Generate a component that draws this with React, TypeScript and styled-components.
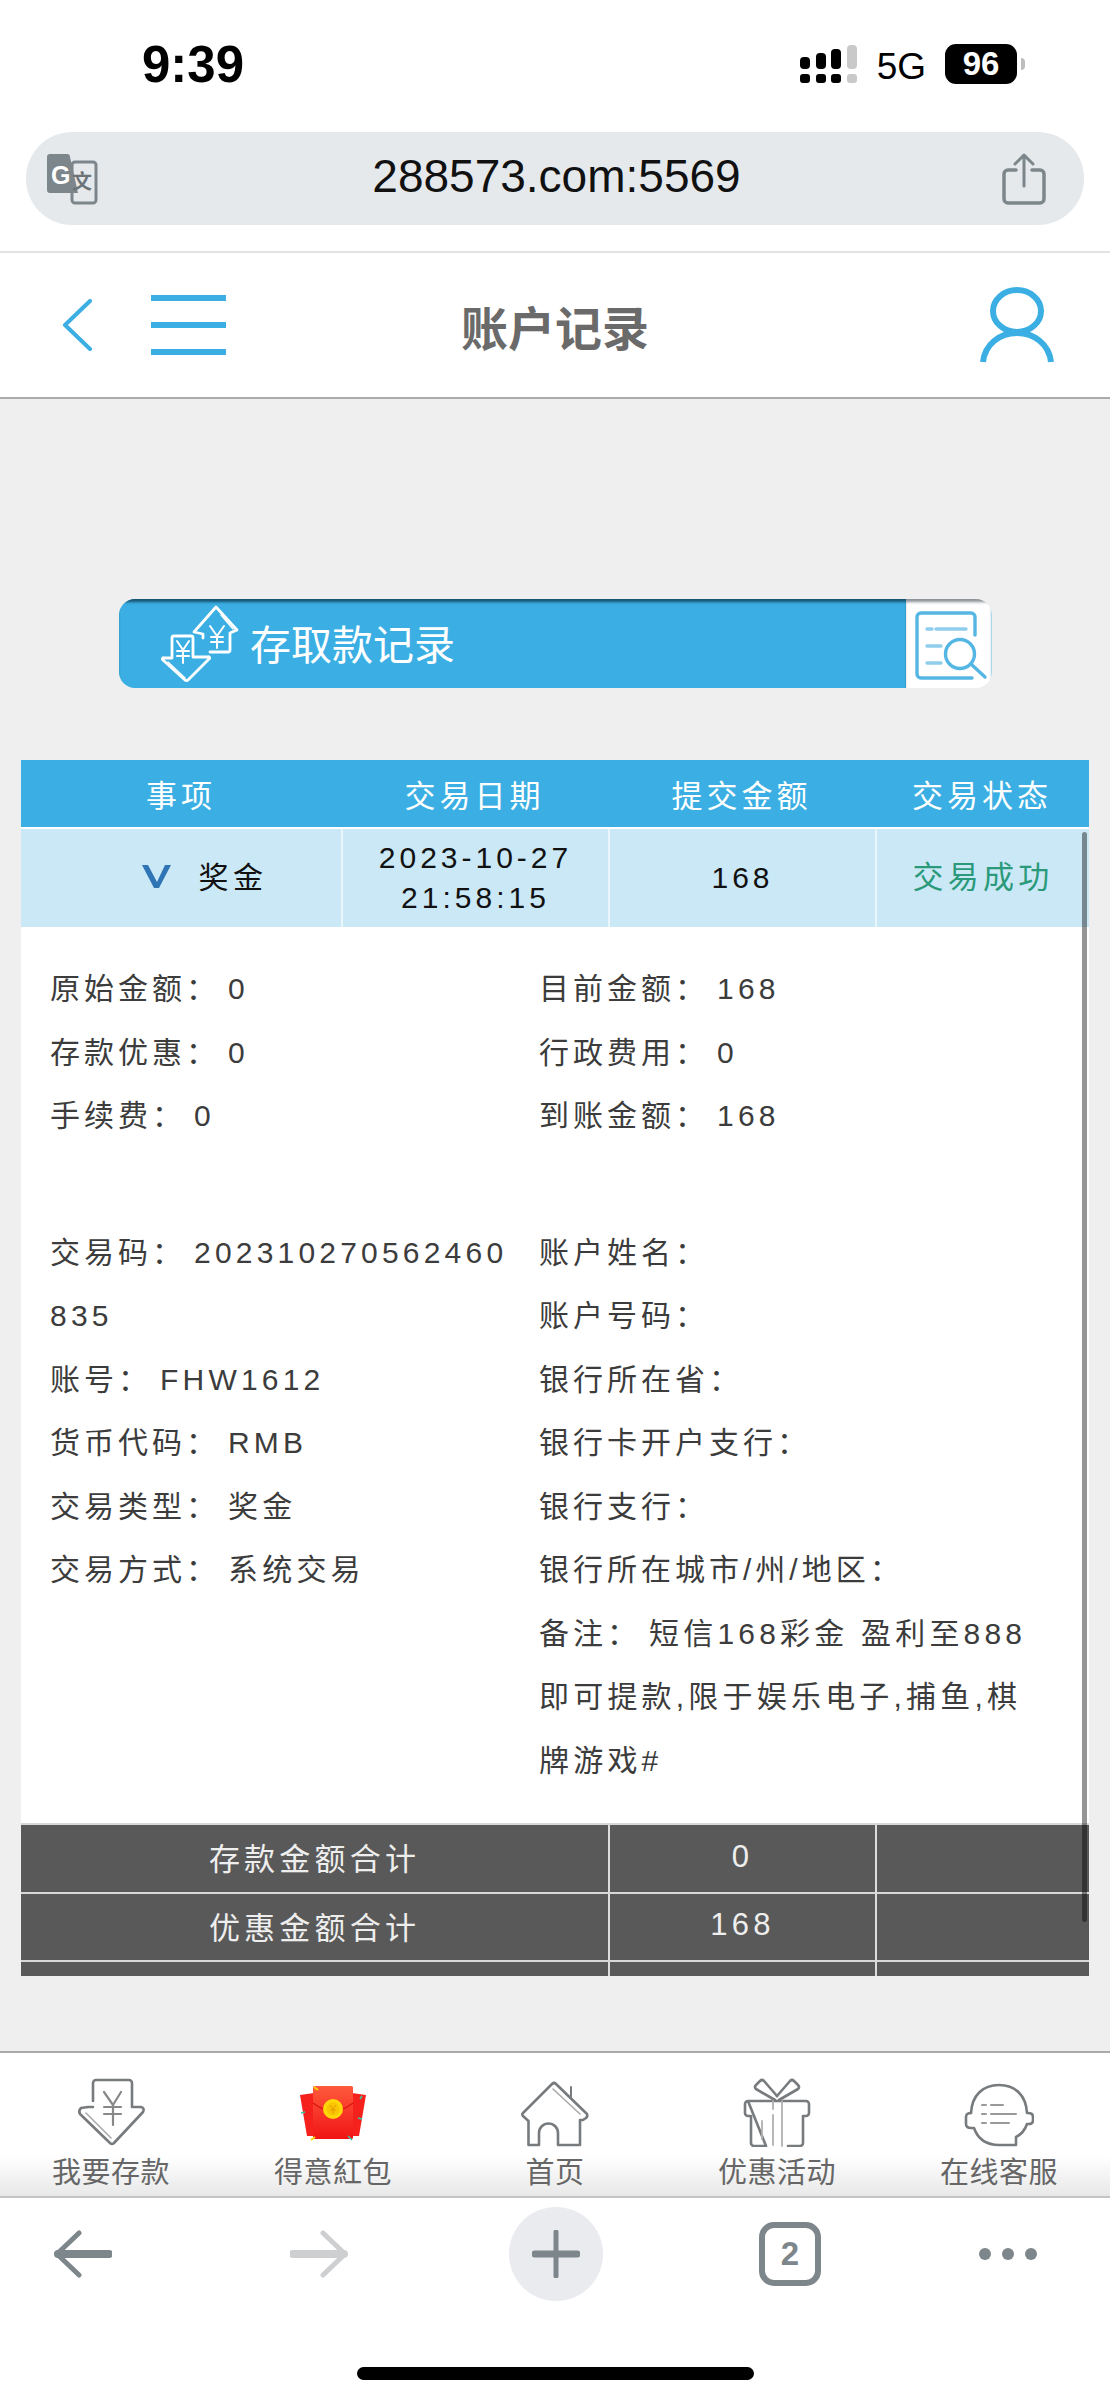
import React from "react";
import styled, { createGlobalStyle } from "styled-components";

const BLUE = "#3bafe3";
const GREY = "#7d868b";
const ICON = "#777b7d";
const FONT = `"Liberation Sans", "Noto Sans CJK SC", sans-serif`;

const GlobalStyle = createGlobalStyle`
  html, body { margin: 0; padding: 0; background: #fff; }
  * { box-sizing: border-box; }
  body { font-family: ${FONT}; }
`;

const Page = styled.div`
  width: 1110px;
  height: 2400px;
  display: flex;
  flex-direction: column;
  overflow: hidden;
  background: #fff;
`;

const StatusBar = styled.div`
  height: 132px;
  padding: 0 85px 4px 142px;
  display: flex;
  align-items: center;
  justify-content: space-between;
`;
const Clock = styled.div`
  font-size: 51px;
  font-weight: 700;
  color: #000;
`;
const StatusRight = styled.div`
  display: flex;
  align-items: center;
`;
const Net = styled.div`
  font-size: 37px;
  color: #000;
  margin: 0 19px 0 20px;
  padding-top: 5px;
`;
const Battery = styled.div`
  width: 72px;
  height: 40px;
  border-radius: 11px;
  background: #000;
  color: #fff;
  font-size: 33px;
  font-weight: 700;
  display: flex;
  align-items: center;
  justify-content: center;
  margin-right: 4px;
`;
const BatteryNub = styled.div`
  width: 4px;
  height: 12px;
  border-radius: 0 4px 4px 0;
  background: #bdbdbd;
`;

const UrlWrap = styled.div`
  height: 121px;
  padding: 0 26px;
  border-bottom: 2px solid #e2e2e2;
`;
const UrlBar = styled.div`
  height: 93px;
  border-radius: 46px;
  background: #e6e9ec;
  padding: 0 38px 0 21px;
  display: flex;
  align-items: center;
  justify-content: space-between;
`;
const UrlText = styled.div`
  font-size: 46px;
  color: #111;
  padding: 0 0 5px 12px;
`;

const Header = styled.div`
  height: 146px;
  padding: 0 56px;
  display: grid;
  grid-template-columns: 1fr auto 1fr;
  align-items: center;
  background: #fff;
  border-bottom: 2px solid #aaa;
`;
const HeaderLeft = styled.div`
  display: flex;
  align-items: center;
  gap: 59px;
  padding-left: 6px;
`;
const Burger = styled.div`
  width: 75px;
  height: 60px;
  display: flex;
  flex-direction: column;
  justify-content: space-between;
  span {
    display: block;
    height: 6px;
    background: ${BLUE};
  }
`;
const Title = styled.h1`
  margin: 0;
  font-size: 47px;
  font-weight: 700;
  color: #6a6a6a;
`;
const HeaderRight = styled.div`
  display: flex;
  justify-content: flex-end;
`;

const Main = styled.main`
  flex: 1;
  background: #efefef;
  padding: 200px 21px 0;
`;
const Banner = styled.div`
  width: 873px;
  height: 89px;
  margin-left: 98px;
  border-radius: 16px;
  overflow: hidden;
  display: flex;
`;
const BannerTitle = styled.div`
  flex: 1;
  display: flex;
  align-items: center;
  gap: 10px;
  padding-left: 41px;
  background: ${BLUE};
  box-shadow: inset 0 4px 3px -1px rgba(10, 50, 70, 0.75);
  color: #fff;
  font-size: 41px;
  span { padding-bottom: 4px; }
`;
const BannerSearch = styled.div`
  width: 86px;
  background: #fff;
  box-shadow: inset 0 4px 3px -1px rgba(60, 70, 80, 0.6);
  border-right: 1px solid #a9d9ef;
`;

const Table = styled.section`
  position: relative;
  margin-top: 72px;
  width: 1068px;
  height: 1216px;
  background: #fff;
  overflow: hidden;
  font-size: 30px;
  letter-spacing: 4px;
`;
const ScrollThumb = styled.div`
  position: absolute;
  left: 1061px;
  top: 72px;
  width: 5px;
  height: 1090px;
  border-radius: 3px;
  background: rgba(0, 0, 0, 0.42);
`;
const Columns = styled.div`
  display: grid;
  grid-template-columns: 320px 267px 267px 214px;
`;
const HeadRow = styled(Columns)`
  height: 67px;
  background: ${BLUE};
  color: #fff;
  margin-bottom: 2px;
`;
const HeadCell = styled.div`
  display: flex;
  align-items: center;
  justify-content: center;
  letter-spacing: 4px;
  font-size: 31px;
`;
const DataRow = styled(Columns)`
  height: 98px;
  background: #cbe8f6;
  color: #111;
`;
const DataCell = styled.div<{ $status?: boolean }>`
  display: flex;
  align-items: center;
  justify-content: center;
  gap: 27px;
  text-align: center;
  line-height: 40px;
  font-size: ${(p) => (p.$status ? 31 : 30)}px;
  letter-spacing: ${(p) => (p.$status ? 4.2 : 4)}px;
  color: ${(p) => (p.$status ? "#2a9a7a" : "#111")};
  border-left: 2px solid #eaf6fb;
  &:first-child { border-left: none; padding-left: 48px; letter-spacing: 4.6px; }
`;
const Details = styled.div`
  height: 896px;
  padding: 30px 0 0 29px;
  display: grid;
  grid-template-columns: 489px 525px;
  grid-template-rows: auto 1fr;
  row-gap: 73px;
  line-height: 63.5px;
  color: #3c3c3c;
`;
const DetailBlock = styled.div`
  padding-right: 20px;
  word-break: break-all;
  p { margin: 0; }
`;
const Value = styled.span`
  margin-left: 8px;
  letter-spacing: 4.2px;
`;
const TotalRow = styled.div<{ $h: number }>`
  display: grid;
  grid-template-columns: 587px 267px 214px;
  height: ${(p) => p.$h}px;
  background: #595959;
  color: #eee;
  border-top: 2px solid #d8d8d8;
  font-size: 31px;
  letter-spacing: 4.2px;
`;
const TotalCell = styled.div`
  display: flex;
  align-items: center;
  justify-content: center;
  padding-bottom: 4px;
  border-left: 2px solid #ddd;
  &:first-child { border-left: none; }
`;

const BottomNav = styled.nav`
  height: 147px;
  padding-top: 24px;
  display: grid;
  grid-template-columns: repeat(5, 222px);
  border-top: 2px solid #aaa;
  border-bottom: 2px solid #c4c4c4;
  background: linear-gradient(#fff 0, #fff 72%, #e8e8e8 100%);
`;
const NavItem = styled.div`
  display: flex;
  flex-direction: column;
  align-items: center;
  color: #666;
  font-size: 29px;
  letter-spacing: 0.5px;
  line-height: 36px;
  svg { margin-bottom: 8px; }
`;

const Chrome = styled.div`
  flex: none;
  height: 202px;
  display: flex;
  flex-direction: column;
  align-items: center;
`;
const Toolbar = styled.div`
  align-self: stretch;
  padding: 9px 0 0 54px;
  display: flex;
  align-items: center;
`;
const ToolSlot = styled.div<{ $ml?: number }>`
  margin-left: ${(p) => p.$ml ?? 0}px;
  display: flex;
`;
const PlusCircle = styled.div`
  width: 94px;
  height: 94px;
  border-radius: 50%;
  background: #e9ebef;
  display: flex;
  align-items: center;
  justify-content: center;
`;
const TabCount = styled.div`
  width: 62px;
  height: 64px;
  border: 6px solid ${GREY};
  border-radius: 15px;
  display: flex;
  align-items: center;
  justify-content: center;
  color: ${GREY};
  font-size: 33px;
  font-weight: 700;
`;
const HomeBar = styled.div`
  margin-top: 66px;
  width: 397px;
  height: 13px;
  border-radius: 7px;
  background: #000;
`;

function Signal() {
  const bars = [
    { x: 0, y: 12, h: 12 },
    { x: 16, y: 8, h: 16 },
    { x: 31, y: 4, h: 20 },
    { x: 47, y: 0, h: 24 },
  ];
  return (
    <svg width="57" height="38" viewBox="0 0 57 38">
      {bars.map((b, i) => (
        <g key={i} fill={i === 3 ? "#c9c9c9" : "#000"}>
          <rect x={b.x} y={b.y} width="10" height={b.h} rx="4" />
          <rect x={b.x} y="29" width="10" height="9" rx="3" />
        </g>
      ))}
    </svg>
  );
}

function TranslateIcon() {
  return (
    <svg width="52" height="52" viewBox="0 0 52 52">
      <rect x="25" y="9" width="24" height="41" rx="3" fill="#e6e9ec" stroke={GREY} strokeWidth="3" />
      <path d="M3 1h17a3 3 0 0 1 3 3l8 36H3a3 3 0 0 1-3-3V4a3 3 0 0 1 3-3z" fill={GREY} />
      <text x="4" y="31" fontFamily="Liberation Sans" fontWeight="700" fontSize="25" fill="#fff">G</text>
      <text x="25" y="36" fontFamily="Noto Sans CJK SC" fontWeight="700" fontSize="20" fill="#6d7478">文</text>
    </svg>
  );
}

function ShareIcon() {
  return (
    <svg width="44" height="52" viewBox="0 0 44 52" fill="none" stroke={GREY}>
      <path d="M14 17H6a4 4 0 0 0-4 4v25a4 4 0 0 0 4 4h32a4 4 0 0 0 4-4V21a4 4 0 0 0-4-4h-8" strokeWidth="3.5" strokeLinecap="round" />
      <path d="M22 33V3M13 11l9-9 9 9" strokeWidth="3" strokeLinecap="round" strokeLinejoin="round" />
    </svg>
  );
}

function BackChevron() {
  return (
    <svg width="30" height="52" viewBox="0 0 30 52" fill="none" stroke={BLUE} strokeWidth="4" strokeLinecap="round" strokeLinejoin="round">
      <path d="M28 2L3 26l25 24" />
    </svg>
  );
}

function UserIcon() {
  return (
    <svg width="74" height="76" viewBox="0 0 74 76" fill="none" stroke={BLUE} strokeWidth="6">
      <ellipse cx="37" cy="24" rx="24" ry="21" />
      <path d="M3 75C5 57 20 46 37 46s32 11 34 29" />
    </svg>
  );
}

function TransferIcon() {
  return (
    <svg width="80" height="80" viewBox="0 0 80 80" fill="none" stroke="#fff" strokeWidth="2.8" strokeLinejoin="round" strokeLinecap="round">
      <path d="M34 28L56 3l21 23-7 3v17a2 2 0 0 1-2 2H50M34 28l9 2v4" />
      <path d="M61 11l12 14" strokeWidth="1.4" />
      <path d="M50 22l7 10 7-10M57 32v12M51 33h12M51 38h12" strokeWidth="2" />
      <path d="M12 34a2 2 0 0 1 2-2h17a2 2 0 0 1 2 2v19h15a1 1 0 0 1 1 2L28 76a2 2 0 0 1-3 0L3 56a1 1 0 0 1 1-2h8z" />
      <path d="M8 58l17 16" strokeWidth="1.4" />
      <path d="M17 37l6 9 6-9M23 46v13M17 47h12M17 52h12" strokeWidth="2" />
    </svg>
  );
}

function SearchDocIcon() {
  return (
    <svg width="84" height="89" viewBox="0 0 84 89" fill="none" stroke="#55b6e4" strokeWidth="3.4" strokeLinecap="round" strokeLinejoin="round">
      <path d="M69 36V18a4 4 0 0 0-4-4H15a4 4 0 0 0-4 4v57a4 4 0 0 0 4 4h51" />
      <path d="M21 30h5M30 30h30M21 47h14M21 64h14" stroke="#8fcdec" />
      <circle cx="54" cy="55" r="14.5" />
      <path d="M66 66l13 12" />
    </svg>
  );
}

function VChevron() {
  return (
    <svg width="29" height="23" viewBox="0 0 29 23" style={{ marginBottom: 4 }}>
      <path d="M0 0h6l9 17 8-17h6L17 23h-5z" fill="#2f75b5" />
    </svg>
  );
}

function DepositIcon() {
  return (
    <svg width="70" height="70" viewBox="0 0 70 70" fill="none" stroke={ICON} strokeWidth="2.6" strokeLinecap="round" strokeLinejoin="round">
      <path d="M17 24V6a3 3 0 0 1 3-3h33a3 3 0 0 1 3 3v24h9q4 1 2 5L38 66a3 3 0 0 1-4 0L4 37q-2-3 1-6l7-1h5" />
      <path d="M10 36l25 25" strokeWidth="1.6" stroke="#aaa" />
      <path d="M28 15l9 13 8-13M37 28v20M28 30h17M28 37h17" strokeWidth="2.2" stroke="#888" />
    </svg>
  );
}

function RedPacketIcon() {
  return (
    <svg width="70" height="70" viewBox="0 0 70 70">
      <defs>
        <linearGradient id="packet" x1="0" y1="0" x2="0" y2="1">
          <stop offset="0" stopColor="#ff5a3c" />
          <stop offset="1" stopColor="#f01414" />
        </linearGradient>
      </defs>
      <path d="M2 18l14-2v43H9z" fill="#f4211c" />
      <path d="M54 16l14 2-7 41h-7z" fill="#f4211c" />
      <rect x="15" y="9" width="40" height="53" rx="1.5" fill="url(#packet)" />
      <path d="M15 26q20 16 40 0" fill="none" stroke="#d91410" strokeWidth="1.2" />
      <circle cx="35" cy="32" r="10" fill="#ffd60a" />
      <circle cx="35" cy="32" r="6.5" fill="#f9c400" />
      <path d="M32 28l3 4 3-4M35 32v5M32 33h6" fill="none" stroke="#e89a00" strokeWidth="1" />
      <path d="M16 10l4 3M17 60l-4 3" stroke="#ffd60a" strokeWidth="2" />
      <path d="M3 36l4-1M62 22l2-3M60 41l4 1M50 59l4 4" stroke="#35c9a8" strokeWidth="1.4" />
    </svg>
  );
}

function HomeIcon() {
  return (
    <svg width="70" height="70" viewBox="0 0 70 70" fill="none" stroke={ICON} strokeWidth="2.6" strokeLinecap="round" strokeLinejoin="round">
      <path d="M8.5 44L3 39q-1.500-2 0-3L32 7q2-2 4 0l31 30q1 2-1 4l-3 2h-3v25H38V56a9 9 0 0 0-19 0v12H8.500z" />
      <path d="M33 12l27 25" strokeWidth="1.6" stroke="#aaa" />
      <path d="M51 10v10" strokeWidth="2" />
    </svg>
  );
}

function GiftIcon() {
  return (
    <svg width="70" height="70" viewBox="0 0 70 70" fill="none" stroke={ICON} strokeWidth="2.6" strokeLinecap="round" strokeLinejoin="round">
      <path d="M33 23L14 12q-2-2 0-4l4-4q2-2 4 0L35 19" />
      <path d="M37 23L56 12q2-2 0-4l-4-4q-2-2-4 0L35 19" />
      <path d="M6 24h58a3 3 0 0 1 3 3v9a3 3 0 0 1-3 3h-3v27a3 3 0 0 1-3 3H46M24 69H12a3 3 0 0 1-3-3V39H6a3 3 0 0 1-3-3v-9a3 3 0 0 1 3-3z" />
      <path d="M31 24v8M31 38v30M40 24v45M20 44v18" strokeWidth="1.8" stroke="#b0b0b0" />
    </svg>
  );
}

function ChatIcon() {
  return (
    <svg width="70" height="70" viewBox="0 0 70 70" fill="none" stroke={ICON} strokeWidth="2.6" strokeLinecap="round" strokeLinejoin="round">
      <path d="M7 36C8 18 19 8 35 8s27 10 28 28" />
      <path d="M7 36q-5 0-5 4v7q0 4 5 4h3q6 17 25 17h17v-8q8-4 11-13h2q4 0 4-4v-3q0-4-5-4" />
      <path d="M18 28h4M27 28h12M18 37h4M27 37h25M18 46h4M27 46h18" strokeWidth="2" stroke="#999" />
    </svg>
  );
}

function ArrowIcon({ color, flip }: { color: string; flip?: boolean }) {
  return (
    <svg width="58" height="48" viewBox="0 0 58 48" fill="none" stroke={color} strokeLinecap="round" strokeLinejoin="round" style={flip ? { transform: "scaleX(-1)" } : undefined}>
      <path d="M25 3L3 24l22 21" strokeWidth="5" />
      <path d="M4 24h51" strokeWidth="8" />
    </svg>
  );
}

function PlusIcon() {
  return (
    <svg width="48" height="48" viewBox="0 0 48 48" stroke={GREY} strokeLinecap="round">
      <path d="M24 2v44" strokeWidth="5" />
      <path d="M3 24h42" strokeWidth="7" />
    </svg>
  );
}

function DotsIcon() {
  return (
    <svg width="58" height="14" viewBox="0 0 58 14" fill={GREY}>
      <circle cx="6" cy="7" r="6" />
      <circle cx="29" cy="7" r="6" />
      <circle cx="52" cy="7" r="6" />
    </svg>
  );
}

type Line = [string, string?];

const leftTop: Line[] = [["原始金额", "0"], ["存款优惠", "0"], ["手续费", "0"]];
const rightTop: Line[] = [["目前金额", "168"], ["行政费用", "0"], ["到账金额", "168"]];
const leftBottom: Line[] = [
  ["交易码", "202310270562460835"],
  ["账号", "FHW1612"],
  ["货币代码", "RMB"],
  ["交易类型", "奖金"],
  ["交易方式", "系统交易"],
];
const rightBottom: Line[] = [
  ["账户姓名"],
  ["账户号码"],
  ["银行所在省"],
  ["银行卡开户支行"],
  ["银行支行"],
  ["银行所在城市/州/地区"],
  ["备注", "短信168彩金 盈利至888即可提款,限于娱乐电子,捕鱼,棋牌游戏#"],
];

const navItems = [
  { label: "我要存款", icon: <DepositIcon /> },
  { label: "得意紅包", icon: <RedPacketIcon /> },
  { label: "首页", icon: <HomeIcon /> },
  { label: "优惠活动", icon: <GiftIcon /> },
  { label: "在线客服", icon: <ChatIcon /> },
];

function Lines({ items }: { items: Line[] }) {
  return (
    <DetailBlock>
      {items.map(([label, value]) => (
        <p key={label}>
          {label}：{value && <Value>{value}</Value>}
        </p>
      ))}
    </DetailBlock>
  );
}

export default function App() {
  return (
    <Page>
      <GlobalStyle />
      <StatusBar>
        <Clock>9:39</Clock>
        <StatusRight>
          <Signal />
          <Net>5G</Net>
          <Battery>96</Battery>
          <BatteryNub />
        </StatusRight>
      </StatusBar>
      <UrlWrap>
        <UrlBar>
          <TranslateIcon />
          <UrlText>288573.com:5569</UrlText>
          <ShareIcon />
        </UrlBar>
      </UrlWrap>
      <Header>
        <HeaderLeft>
          <BackChevron />
          <Burger>
            <span />
            <span />
            <span />
          </Burger>
        </HeaderLeft>
        <Title>账户记录</Title>
        <HeaderRight>
          <UserIcon />
        </HeaderRight>
      </Header>
      <Main>
        <Banner>
          <BannerTitle>
            <TransferIcon />
            <span>存取款记录</span>
          </BannerTitle>
          <BannerSearch>
            <SearchDocIcon />
          </BannerSearch>
        </Banner>
        <Table>
          <HeadRow>
            <HeadCell>事项</HeadCell>
            <HeadCell>交易日期</HeadCell>
            <HeadCell>提交金额</HeadCell>
            <HeadCell>交易状态</HeadCell>
          </HeadRow>
          <DataRow>
            <DataCell>
              <VChevron />
              奖金
            </DataCell>
            <DataCell>
              2023-10-27
              <br />
              21:58:15
            </DataCell>
            <DataCell>168</DataCell>
            <DataCell $status>交易成功</DataCell>
          </DataRow>
          <Details>
            <Lines items={leftTop} />
            <Lines items={rightTop} />
            <Lines items={leftBottom} />
            <Lines items={rightBottom} />
          </Details>
          <TotalRow $h={69}>
            <TotalCell>存款金额合计</TotalCell>
            <TotalCell>0</TotalCell>
            <TotalCell />
          </TotalRow>
          <TotalRow $h={68}>
            <TotalCell>优惠金额合计</TotalCell>
            <TotalCell>168</TotalCell>
            <TotalCell />
          </TotalRow>
          <TotalRow $h={16}>
            <TotalCell />
            <TotalCell />
            <TotalCell />
          </TotalRow>
          <ScrollThumb />
        </Table>
      </Main>
      <BottomNav>
        {navItems.map((n) => (
          <NavItem key={n.label}>
            {n.icon}
            {n.label}
          </NavItem>
        ))}
      </BottomNav>
      <Chrome>
        <Toolbar>
          <ToolSlot>
            <ArrowIcon color={GREY} />
          </ToolSlot>
          <ToolSlot $ml={178}>
            <ArrowIcon color="#cdcfd0" flip />
          </ToolSlot>
          <ToolSlot $ml={161}>
            <PlusCircle>
              <PlusIcon />
            </PlusCircle>
          </ToolSlot>
          <ToolSlot $ml={156}>
            <TabCount>2</TabCount>
          </ToolSlot>
          <ToolSlot $ml={158}>
            <DotsIcon />
          </ToolSlot>
        </Toolbar>
        <HomeBar />
      </Chrome>
    </Page>
  );
}
